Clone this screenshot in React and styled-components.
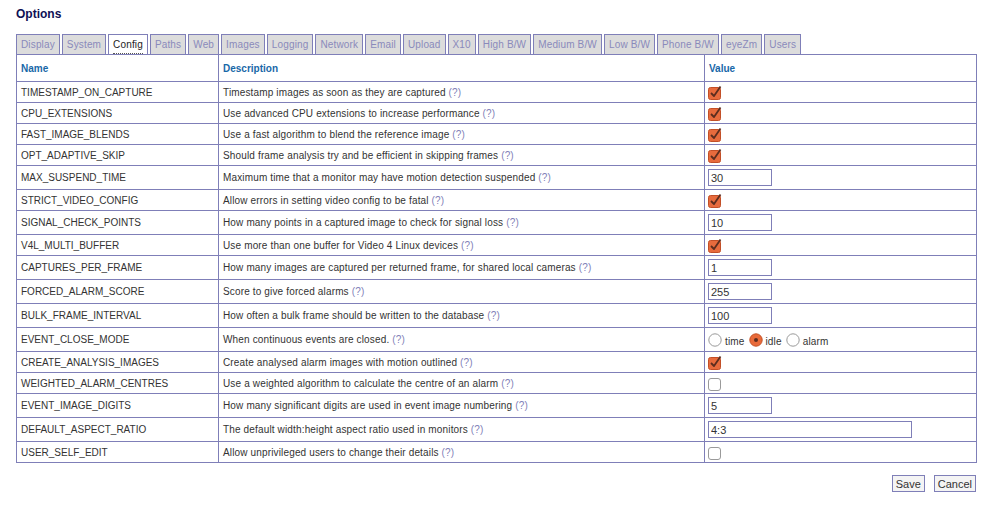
import React from "react";
import styled, { createGlobalStyle } from "styled-components";

const Global = createGlobalStyle`
  html, body { margin: 0; padding: 0; background: #fff; }
  body { font-family: "Liberation Sans", Arial, sans-serif; color: #333; }
`;

const BORDER = "#7f7fb8";

const Page = styled.div`
  width: 960px;
  padding: 0 14px 20px 16px;
`;

const Title = styled.h2`
  margin: 0;
  padding-top: 7px;
  font-size: 12px;
  line-height: 14px;
  font-weight: bold;
  color: #101055;
`;

const Tabs = styled.ul`
  display: flex;
  list-style: none;
  margin: 13px 0 0;
  padding: 0;
  gap: 2px;
  height: 20px;
`;

const Tab = styled.li`
  box-sizing: border-box;
  height: 20px;
  padding: 0 4px;
  border: 1px solid ${BORDER};
  border-bottom: none;
  background: ${(p) => (p.$active ? "#fff" : "#dcdcdc")};
  color: ${(p) => (p.$active ? "#222" : "#8a8abb")};
  font-size: 10px;
  letter-spacing: 0.15px;
  line-height: 19px;
  white-space: nowrap;
`;

const TabLabel = styled.span`
  display: inline-block;
  line-height: 16px;
  border-bottom: 1px dotted ${(p) => (p.$active ? "#555" : "transparent")};
`;

const Table = styled.table`
  width: 960px;
  border-collapse: collapse;
  table-layout: fixed;
  border: 1px solid ${BORDER};
`;

const HeadCell = styled.th`
  text-align: left;
  padding: 0 4px;
  height: 26px;
  font-size: 10px;
  font-weight: bold;
  color: #1868a8;
  border: 1px solid ${BORDER};
`;

const Row = styled.tr`
  height: ${(p) => p.$h}px;
`;

const Cell = styled.td`
  padding: 0 4px;
  font-size: 10px;
  color: #333;
  border: 1px solid ${BORDER};
  vertical-align: middle;
  white-space: nowrap;
  letter-spacing: ${(p) => (p.$wide ? "0.15px" : "0")};
`;

const Help = styled.span`
  color: #7f7fb8;
`;

const TextInput = styled.input`
  box-sizing: border-box;
  width: ${(p) => p.$w}px;
  height: 17px;
  margin: 0 0 0 -1px;
  padding: 0 2px;
  border: 1px solid ${BORDER};
  font-family: "Liberation Sans", Arial, sans-serif;
  font-size: 11px;
  color: #333;
  background: #fff;
  display: block;
  outline: none;
`;

const BoxWrap = styled.span`
  display: block;
  width: 15px;
  height: 15px;
  margin-left: -1px;
`;

const Checkbox = ({ checked }) => (
  <BoxWrap>
    <svg width="15" height="15" viewBox="0 0 15 15">
      {checked ? (
        <>
          <rect x="0.5" y="2.5" width="12" height="12" rx="2" fill="#e76b3d" stroke="#c24f27" />
          <path d="M3 8 L6 11 L12.5 1.5" fill="none" stroke="#5b2d1f" strokeWidth="1.8" strokeLinejoin="round" />
        </>
      ) : (
        <rect x="0.5" y="2.5" width="12" height="12" rx="2.5" fill="#fff" stroke="#9a9a9a" />
      )}
    </svg>
  </BoxWrap>
);

const RadioGroup = styled.div`
  display: flex;
  align-items: center;
  margin-left: -1px;
`;

const RadioLabel = styled.span`
  font-size: 10px;
  letter-spacing: 0.15px;
  margin: 4px 4px 0 3px;
`;

const Radio = ({ checked }) => (
  <svg width="14" height="14" viewBox="0 0 14 14">
    {checked ? (
      <>
        <circle cx="7" cy="7" r="6.2" fill="#e86a3a" stroke="#c45226" />
        <circle cx="7" cy="7" r="2" fill="#5b2d1f" />
      </>
    ) : (
      <circle cx="7" cy="7" r="6.2" fill="#fff" stroke="#9a9a9a" />
    )}
  </svg>
);

const Actions = styled.div`
  display: flex;
  justify-content: flex-end;
  gap: 9px;
  margin-top: 12px;
`;

const Button = styled.button`
  box-sizing: border-box;
  height: 17px;
  min-width: ${(p) => p.$w}px;
  padding: 0 3px;
  border: 1px solid ${BORDER};
  background: #f4f4f4;
  font-family: "Liberation Sans", Arial, sans-serif;
  font-size: 11px;
  color: #333;
  line-height: 14px;
`;

const tabs = [
  "Display", "System", "Config", "Paths", "Web", "Images", "Logging", "Network",
  "Email", "Upload", "X10", "High B/W", "Medium B/W", "Low B/W", "Phone B/W", "eyeZm", "Users",
];

const rows = [
  { n: "TIMESTAMP_ON_CAPTURE", d: "Timestamp images as soon as they are captured", t: "check", v: true },
  { n: "CPU_EXTENSIONS", d: "Use advanced CPU extensions to increase performance", t: "check", v: true },
  { n: "FAST_IMAGE_BLENDS", d: "Use a fast algorithm to blend the reference image", t: "check", v: true },
  { n: "OPT_ADAPTIVE_SKIP", d: "Should frame analysis try and be efficient in skipping frames", t: "check", v: true },
  { n: "MAX_SUSPEND_TIME", d: "Maximum time that a monitor may have motion detection suspended", t: "text", v: "30" },
  { n: "STRICT_VIDEO_CONFIG", d: "Allow errors in setting video config to be fatal", t: "check", v: true },
  { n: "SIGNAL_CHECK_POINTS", d: "How many points in a captured image to check for signal loss", t: "text", v: "10" },
  { n: "V4L_MULTI_BUFFER", d: "Use more than one buffer for Video 4 Linux devices", t: "check", v: true },
  { n: "CAPTURES_PER_FRAME", d: "How many images are captured per returned frame, for shared local cameras", t: "text", v: "1" },
  { n: "FORCED_ALARM_SCORE", d: "Score to give forced alarms", t: "text", v: "255" },
  { n: "BULK_FRAME_INTERVAL", d: "How often a bulk frame should be written to the database", t: "text", v: "100" },
  { n: "EVENT_CLOSE_MODE", d: "When continuous events are closed.", t: "radio", v: "idle" },
  { n: "CREATE_ANALYSIS_IMAGES", d: "Create analysed alarm images with motion outlined", t: "check", v: true },
  { n: "WEIGHTED_ALARM_CENTRES", d: "Use a weighted algorithm to calculate the centre of an alarm", t: "check", v: false },
  { n: "EVENT_IMAGE_DIGITS", d: "How many significant digits are used in event image numbering", t: "text", v: "5" },
  { n: "DEFAULT_ASPECT_RATIO", d: "The default width:height aspect ratio used in monitors", t: "text", v: "4:3", w: 204 },
  { n: "USER_SELF_EDIT", d: "Allow unprivileged users to change their details", t: "check", v: false },
];

const renderValue = (r) => {
  if (r.t === "check") return <Checkbox checked={r.v} />;
  if (r.t === "text") return <TextInput $w={r.w || 64} defaultValue={r.v} />;
  return (
    <RadioGroup>
      {["time", "idle", "alarm"].map((o) => (
        <React.Fragment key={o}>
          <Radio checked={o === r.v} />
          <RadioLabel>{o}</RadioLabel>
        </React.Fragment>
      ))}
    </RadioGroup>
  );
};

export default function App() {
  return (
    <Page>
      <Global />
      <Title>Options</Title>
      <Tabs>
        {tabs.map((t) => (
          <Tab key={t} $active={t === "Config"}>
            <TabLabel $active={t === "Config"}>{t}</TabLabel>
          </Tab>
        ))}
      </Tabs>
      <Table>
        <colgroup>
          <col style={{ width: 202 }} />
          <col style={{ width: 486 }} />
          <col style={{ width: 272 }} />
        </colgroup>
        <thead>
          <tr>
            <HeadCell>Name</HeadCell>
            <HeadCell>Description</HeadCell>
            <HeadCell>Value</HeadCell>
          </tr>
        </thead>
        <tbody>
          {rows.map((r) => (
            <Row key={r.n} $h={r.t === "check" ? 21 : 24}>
              <Cell>{r.n}</Cell>
              <Cell $wide>
                {r.d} <Help>(?)</Help>
              </Cell>
              <Cell>{renderValue(r)}</Cell>
            </Row>
          ))}
        </tbody>
      </Table>
      <Actions>
        <Button $w={31}>Save</Button>
        <Button $w={40}>Cancel</Button>
      </Actions>
    </Page>
  );
}
